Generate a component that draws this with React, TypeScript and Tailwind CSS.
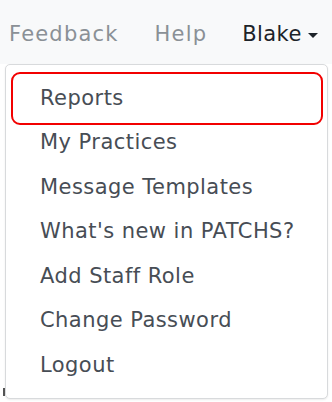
export default function App() {
  const items = [
    'Reports',
    'My Practices',
    'Message Templates',
    "What's new in PATCHS?",
    'Add Staff Role',
    'Change Password',
    'Logout',
  ];
  return (
    <div
      className="relative w-[332px] h-[402px] overflow-hidden bg-white"
      style={{ fontFamily: '"DejaVu Sans", sans-serif' }}
    >
      <nav className="flex h-[64px] items-center bg-[#f8f9fa] pl-[9px] pt-[5px] text-[21px] tracking-[1.2px]">
        <span className="text-[#8a9096]">Feedback</span>
        <span className="ml-[36px] text-[#8a9096]">Help</span>
        <span className="ml-[35px] flex items-center tracking-[0.4px] text-[#1d2329]">
          Blake
          <span className="ml-[6px] mt-[1px] h-0 w-0 border-x-[5px] border-t-[5px] border-x-transparent border-t-[#1d2329]" />
        </span>
      </nav>

      <div className="pointer-events-none absolute bottom-[6px] left-[3px] h-[8px] w-[2px] bg-[#555]" />

      <div className="absolute left-[5px] top-[64px] w-[323px] h-[335px] rounded-[5px] border border-[#d8dadc] bg-white pt-[12px] shadow-[0_1px_2px_rgba(0,0,0,0.08)]">
        {items.map((t, i) => (
          <div
            key={t}
            className="relative flex h-[44.5px] items-center pl-[34px] pb-[2px] text-[21px] tracking-[0.45px] text-[#474d55] whitespace-nowrap"
          >
            {t}
            {i === 0 && (
              <div className="absolute left-[5px] right-[4px] top-[-5px] bottom-[-3px] rounded-[9px] border-2 border-[#f20000]" />
            )}
          </div>
        ))}
      </div>
    </div>
  );
}
